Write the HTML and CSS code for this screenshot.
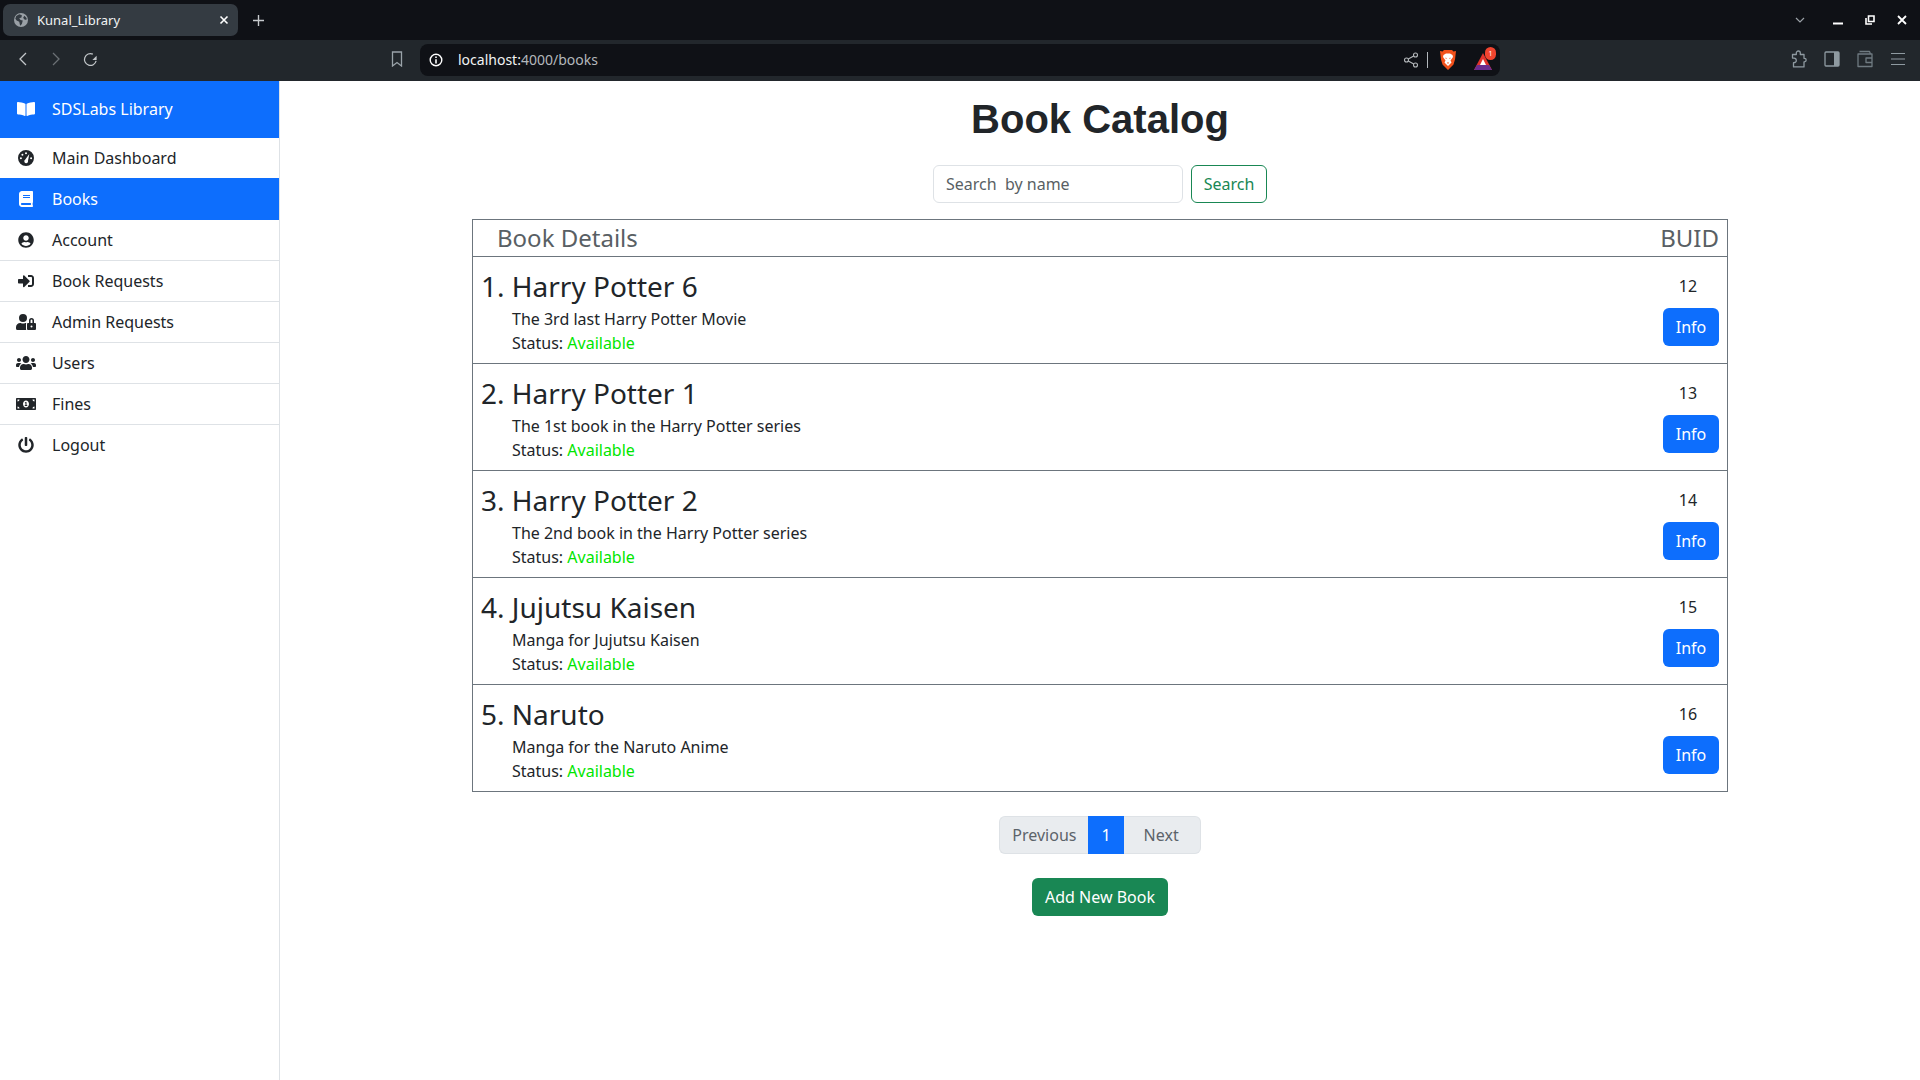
FILE: index.html
```html
<!DOCTYPE html>
<html lang="en">
<head>
    <meta charset="UTF-8">
    <title>Kunal_Library</title>
    <link rel="stylesheet" href="styles.css">
</head>
<body>
    <div class="tabstrip">
        <div class="tab">
            <svg class="tab-globe" viewBox="0 0 16 16"><circle cx="8" cy="8" r="8" fill="#9aa0a6"/><path d="M2.500 3.500l3.500-2 3 1-.5 2.500-2.500 1 1.500 2 2.500.5-1 4-2 2-1-4.500-3-1.500-1.500-2zM12 3l2.500 3-.5 2-2.500-1-1-2z" fill="#343b42"/></svg>
            <span class="tab-title">Kunal_Library</span>
            <svg class="tab-close" viewBox="0 0 10 10"><path d="M1.500 1.500l7 7M8.500 1.500l-7 7" stroke="#fff" stroke-width="1.600"/></svg>
        </div>
        <svg class="tab-new" viewBox="0 0 12 12"><path d="M6 0v12M0 6h12" stroke="#c6cacd" stroke-width="1.500"/></svg>
        <div class="tabstrip-right">
            <svg class="win-chevron" viewBox="0 0 10 6"><path d="M1 1l4 4 4-4" stroke="#9aa0a6" stroke-width="1.200" fill="none"/></svg>
            <svg class="win-btn" viewBox="0 0 10 10"><path d="M0 8.500h10" stroke="#fff" stroke-width="2"/></svg>
            <svg class="win-btn" viewBox="0 0 10 10"><path d="M3.500 1h5.500v5.500h-5.500zM1 3v6h6" stroke="#fff" stroke-width="1.600" fill="none"/></svg>
            <svg class="win-btn" viewBox="0 0 10 10"><path d="M1 1l8 8M9 1l-8 8" stroke="#fff" stroke-width="1.800"/></svg>
        </div>
    </div>
    <div class="toolbar">
        <svg class="nav-icon" viewBox="0 0 10 16"><path d="M8 2L2 8l6 6" stroke="#c3c7ca" stroke-width="1.300" fill="none"/></svg>
        <svg class="nav-icon nav-forward" viewBox="0 0 10 16"><path d="M2 2l6 6-6 6" stroke="#6b7075" stroke-width="1.300" fill="none"/></svg>
        <svg class="nav-reload" viewBox="0 0 16 16"><path d="M14 9.500A6.300 6.300 0 1 1 10.500 2.300" stroke="#c3c7ca" stroke-width="1.300" fill="none"/><path d="M14.500 4v4.500H10z" fill="#c3c7ca"/></svg>
        <svg class="nav-bookmark" viewBox="0 0 12 16"><path d="M1.500 1h9v14l-4.500-3.500L1.500 15z" stroke="#9aa3a9" stroke-width="1.300" fill="none"/></svg>
        <div class="urlbar">
            <svg class="url-info" viewBox="0 0 14 14"><circle cx="7" cy="7" r="5.800" stroke="#fff" stroke-width="1.400" fill="none"/><path d="M7 6.200v4.200M7 3.400v1.700" stroke="#fff" stroke-width="1.600"/></svg>
            <span class="url-text"><span class="url-host">localhost:</span>4000/books</span>
            <svg class="url-share" viewBox="0 0 16 16"><circle cx="3.500" cy="8" r="2" stroke="#b5b9bc" stroke-width="1.100" fill="none"/><circle cx="12.500" cy="3" r="2" stroke="#b5b9bc" stroke-width="1.100" fill="none"/><circle cx="12.500" cy="13" r="2" stroke="#b5b9bc" stroke-width="1.100" fill="none"/><path d="M5.300 7l5.400-3M5.300 9l5.400 3" stroke="#b5b9bc" stroke-width="1.100"/></svg>
            <span class="url-divider"></span>
            <svg class="url-brave" viewBox="0 0 16 20"><path d="M4 0h8l1.500 1.500L16 1l-1 8.500-1.500 5L8 20l-5.500-5.500L1 9.500 0 1l2.500.5z" fill="#f1511b"/><path d="M3.500 5L6 3.500h4L12.500 5l.5 2-2.500 3.500 1 2L8 16l-3.500-3.500 1-2L3 7z" fill="#fff"/><path d="M5.500 7.500L7 8.200 5.800 9zM10.500 7.500L9 8.200 10.200 9zM6.800 12.500h2.400L8 14z" fill="#f1511b"/></svg>
            <div class="url-rewards">
                <svg viewBox="0 0 18 17"><path d="M9 0l9 17H0z" fill="#e2342d"/><path d="M0 17l3-5h12l3 5z" fill="#6a2d8f"/><path d="M9 6l3 6H6z" fill="#fff"/></svg>
                <span class="url-badge">1</span>
            </div>
        </div>
        <div class="toolbar-right">
            <svg class="tool-icon" viewBox="0 0 16 18"><path d="M1.500 4.500h3.800V3a2 2 0 0 1 4 0v1.500h3.700v3.800h.4a1.800 1.800 0 0 1 0 3.600H13v5H2.500v-4.200h.5a2.300 2.300 0 0 0 0-4.600h-1.500z" stroke="#8f9aa1" stroke-width="1.300" fill="none" stroke-linejoin="round"/></svg>
            <svg class="tool-icon" viewBox="0 0 16 18"><rect x="1" y="2" width="14" height="14" rx="1" stroke="#8f9aa1" stroke-width="1.300" fill="none"/><rect x="10" y="2" width="5" height="14" fill="#8f9aa1"/></svg>
            <svg class="tool-icon" viewBox="0 0 16 18"><path d="M2.500 1.500h10l1 2.500M1 4h14v12.500H1zM9 8h6v4.500H9z" stroke="#6f7a81" stroke-width="1.300" fill="none" stroke-linejoin="round"/></svg>
            <svg class="tool-icon" viewBox="0 0 16 18"><path d="M1 3.500h14M1 9h14M1 14.500h14" stroke="#8f9aa1" stroke-width="1.200"/></svg>
        </div>
    </div>

    <div class="page">
        <nav class="sidebar">
            <div class="brand">
                <svg class="side-icon" viewBox="0 0 576 512"><path d="M542.220 32.050c-54.800 3.110-163.720 14.430-230.960 55.590-4.640 2.840-7.270 7.890-7.270 13.170v363.870c0 11.550 12.630 18.850 23.280 13.490 69.180-34.820 169.230-44.320 218.700-46.920 16.890-.89 30.020-14.430 30.020-30.660V62.750c.01-17.710-15.350-31.740-33.770-30.700zM264.730 87.640C197.500 46.480 88.580 35.170 33.780 32.050 15.360 31.010 0 45.040 0 62.750V400.600c0 16.240 13.130 29.780 30.020 30.660 49.490 2.600 149.590 12.110 218.770 46.950 10.620 5.350 23.210-1.940 23.210-13.460V100.630c0-5.290-2.620-10.100-7.270-12.990z"/></svg>
                SDSLabs Library
            </div>
            <a class="side-link">
                <svg class="side-icon" viewBox="0 0 16 16"><path fill-rule="evenodd" d="M8 0a8 8 0 1 1 0 16A8 8 0 0 1 8 0zM7 3.200a1 1 0 1 0 2 0 1 1 0 0 0-2 0zM3.400 4.800a1 1 0 1 0 2 0 1 1 0 0 0-2 0zM1.900 8.300a1 1 0 1 0 2 0 1 1 0 0 0-2 0zM12.100 8.300a1 1 0 1 0 2 0 1 1 0 0 0-2 0zM11.300 3.900L7.100 9.800a1.900 1.900 0 1 0 2.900 1z"/></svg>
                Main Dashboard
            </a>
            <a class="side-link side-active">
                <svg class="side-icon" viewBox="0 0 448 512"><path d="M448 360V24c0-13.300-10.700-24-24-24H96C43 0 0 43 0 96v320c0 53 43 96 96 96h328c13.300 0 24-10.700 24-24v-16c0-7.500-3.500-14.300-8.900-18.700-4.200-15.400-4.200-59.300 0-74.700 5.400-4.300 8.900-11.100 8.900-18.600zM128 134c0-3.300 2.700-6 6-6h212c3.300 0 6 2.700 6 6v20c0 3.300-2.700 6-6 6H134c-3.300 0-6-2.700-6-6v-20zm0 64c0-3.300 2.700-6 6-6h212c3.300 0 6 2.700 6 6v20c0 3.300-2.700 6-6 6H134c-3.300 0-6-2.700-6-6v-20zm253.400 250H96c-17.700 0-32-14.300-32-32 0-17.600 14.400-32 32-32h285.400c-1.900 17.100-1.900 46.900 0 64z"/></svg>
                Books
            </a>
            <a class="side-link side-border">
                <svg class="side-icon" viewBox="0 0 496 512"><path d="M248 8C111 8 0 119 0 256s111 248 248 248 248-111 248-248S385 8 248 8zm0 96c48.600 0 88 39.400 88 88s-39.400 88-88 88-88-39.400-88-88 39.400-88 88-88zm0 344c-58.700 0-111.300-26.600-146.500-68.200 18.800-35.400 55.600-59.800 98.500-59.800 2.400 0 4.800.4 7.100 1.100 13 4.200 26.600 6.900 40.900 6.900 14.300 0 28-2.700 40.900-6.900 2.300-.7 4.700-1.100 7.100-1.100 42.900 0 79.700 24.400 98.500 59.800C359.300 421.400 306.700 448 248 448z"/></svg>
                Account
            </a>
            <a class="side-link side-border">
                <svg class="side-icon" viewBox="0 0 512 512"><path d="M416 448h-84c-6.600 0-12-5.400-12-12v-40c0-6.600 5.400-12 12-12h84c17.700 0 32-14.300 32-32V160c0-17.700-14.300-32-32-32h-84c-6.600 0-12-5.400-12-12V76c0-6.600 5.400-12 12-12h84c53 0 96 43 96 96v192c0 53-43 96-96 96zm-47-201L201 79c-15-15-41-4.500-41 17v96H24c-13.300 0-24 10.700-24 24v96c0 13.300 10.700 24 24 24h136v96c0 21.500 26 32 41 17l168-168c9.300-9.400 9.300-24.600 0-34z"/></svg>
                Book Requests
            </a>
            <a class="side-link side-border">
                <svg class="side-icon" viewBox="0 0 640 512"><path d="M224 256A128 128 0 1 0 96 128a128 128 0 0 0 128 128zm96 64a63.080 63.080 0 0 1 8.100-30.500c-4.800-.5-9.500-1.500-14.500-1.500h-16.700a174.080 174.080 0 0 1-145.800 0h-16.700A134.430 134.430 0 0 0 0 422.400V464a48 48 0 0 0 48 48h280.900a63.540 63.540 0 0 1-8.900-32zm288-32h-32v-80a80 80 0 0 0-160 0v80h-32a32 32 0 0 0-32 32v160a32 32 0 0 0 32 32h224a32 32 0 0 0 32-32V320a32 32 0 0 0-32-32zM496 432a32 32 0 1 1 32-32 32 32 0 0 1-32 32zm30-144H466v-80a30 30 0 0 1 60 0z"/></svg>
                Admin Requests
            </a>
            <a class="side-link side-border">
                <svg class="side-icon" viewBox="0 0 640 512"><path d="M96 224c35.300 0 64-28.700 64-64s-28.700-64-64-64-64 28.700-64 64 28.700 64 64 64zm448 0c35.300 0 64-28.700 64-64s-28.700-64-64-64-64 28.700-64 64 28.700 64 64 64zm32 32h-64c-17.600 0-33.500 7.100-45.100 18.600 40.300 22.100 68.900 62 75.100 109.400h66c17.700 0 32-14.300 32-32v-32c0-35.300-28.700-64-64-64zm-256 0c61.900 0 112-50.100 112-112S381.900 32 320 32 208 82.100 208 144s50.100 112 112 112zm76.800 32h-8.300c-20.800 10-43.900 16-68.500 16s-47.600-6-68.500-16h-8.300C179.600 288 128 339.600 128 403.200V432c0 26.500 21.500 48 48 48h288c26.500 0 48-21.500 48-48v-28.800c0-63.600-51.600-115.200-115.200-115.200zm-223.700-13.400C161.500 263.100 145.600 256 128 256H64c-35.300 0-64 28.700-64 64v32c0 17.700 14.300 32 32 32h65.900c6.300-47.400 34.900-87.300 75.200-109.400z"/></svg>
                Users
            </a>
            <a class="side-link side-border">
                <svg class="side-icon" viewBox="0 0 640 512"><path d="M352 288h-16v-88c0-4.420-3.580-8-8-8h-13.580c-4.740 0-9.370 1.400-13.310 4.030l-15.330 10.220a7.994 7.994 0 0 0-2.220 11.090l8.880 13.310a7.994 7.994 0 0 0 11.090 2.220l.47-.31V288h-16c-4.420 0-8 3.580-8 8v16c0 4.420 3.580 8 8 8h64c4.420 0 8-3.580 8-8v-16c0-4.420-3.580-8-8-8zM608 64H32C14.330 64 0 78.330 0 96v320c0 17.670 14.330 32 32 32h576c17.670 0 32-14.330 32-32V96c0-17.670-14.330-32-32-32zM48 400v-64c35.350 0 64 28.650 64 64H48zm0-224v-64h64c0 35.350-28.650 64-64 64zm272 192c-53 0-96-50.150-96-112 0-61.860 43-112 96-112s96 50.140 96 112c0 61.880-43 112-96 112zm272 32h-64c0-35.350 28.650-64 64-64v64zm0-224c-35.350 0-64-28.650-64-64h64v64z"/></svg>
                Fines
            </a>
            <a class="side-link">
                <svg class="side-icon" viewBox="0 0 512 512"><path d="M400 54.100c63 45 104 118.600 104 201.900 0 136.800-110.800 247.700-247.500 248C120 504.300 8.200 393 8 256.400 7.900 173.100 48.900 99.300 111.800 54.200c11.700-8.300 28-4.800 35 7.700L162.600 90c5.900 10.500 3.100 23.800-6.600 31-41.500 30.800-68 79.600-68 134.900-.1 92.300 74.500 168.100 168 168.100 91.600 0 168.600-74.200 168-169.100-.3-51.800-24.700-101.800-68.100-134-9.700-7.200-12.400-20.500-6.500-30.900l15.800-28.100c7-12.400 23.200-16.100 34.800-7.800zM296 264V24c0-13.300-10.700-24-24-24h-32c-13.300 0-24 10.700-24 24v240c0 13.300 10.700 24 24 24h32c13.300 0 24-10.700 24-24z"/></svg>
                Logout
            </a>
        </nav>

        <main class="content">
            <h1 class="page-title">Book Catalog</h1>
            <form class="search-row">
                <input class="search-input" type="text" placeholder="Search  by name">
                <button class="search-btn" type="button">Search</button>
            </form>

            <div class="catalog">
                <div class="catalog-head">
                    <span class="head-title">Book Details</span>
                    <span>BUID</span>
                </div>
                <div class="book-row">
                    <div class="book-main">
                        <h3 class="book-name">1. Harry Potter 6</h3>
                        <p class="book-desc">The 3rd last Harry Potter Movie</p>
                        <p class="book-desc">Status: <span class="avail">Available</span></p>
                    </div>
                    <div class="book-side"><span class="buid">12</span><a class="info-btn">Info</a></div>
                </div>
                <div class="book-row">
                    <div class="book-main">
                        <h3 class="book-name">2. Harry Potter 1</h3>
                        <p class="book-desc">The 1st book in the Harry Potter series</p>
                        <p class="book-desc">Status: <span class="avail">Available</span></p>
                    </div>
                    <div class="book-side"><span class="buid">13</span><a class="info-btn">Info</a></div>
                </div>
                <div class="book-row">
                    <div class="book-main">
                        <h3 class="book-name">3. Harry Potter 2</h3>
                        <p class="book-desc">The 2nd book in the Harry Potter series</p>
                        <p class="book-desc">Status: <span class="avail">Available</span></p>
                    </div>
                    <div class="book-side"><span class="buid">14</span><a class="info-btn">Info</a></div>
                </div>
                <div class="book-row">
                    <div class="book-main">
                        <h3 class="book-name">4. Jujutsu Kaisen</h3>
                        <p class="book-desc">Manga for Jujutsu Kaisen</p>
                        <p class="book-desc">Status: <span class="avail">Available</span></p>
                    </div>
                    <div class="book-side"><span class="buid">15</span><a class="info-btn">Info</a></div>
                </div>
                <div class="book-row">
                    <div class="book-main">
                        <h3 class="book-name">5. Naruto</h3>
                        <p class="book-desc">Manga for the Naruto Anime</p>
                        <p class="book-desc">Status: <span class="avail">Available</span></p>
                    </div>
                    <div class="book-side"><span class="buid">16</span><a class="info-btn">Info</a></div>
                </div>
            </div>

            <div class="pager">
                <a class="page-link page-first">Previous</a>
                <a class="page-link page-current">1</a>
                <a class="page-link page-last">Next</a>
            </div>
            <a class="add-btn">Add New Book</a>
        </main>
    </div>
</body>
</html>
```

FILE: styles.css
```css
* {
    box-sizing: border-box;
}

body {
    margin: 0;
    height: 1080px;
    overflow: hidden;
    font-family: "Noto Sans", sans-serif;
    font-size: 16px;
    color: #212529;
    background-color: #fff;
    display: flex;
    flex-direction: column;
}

/* browser chrome */
.tabstrip {
    height: 40px;
    background-color: #0f1116;
    display: flex;
    align-items: center;
    padding-left: 3px;
}

.tab {
    width: 235px;
    height: 32px;
    background-color: #343b42;
    border-radius: 7px;
    display: flex;
    align-items: center;
    padding: 0 9px 0 11px;
    color: #f1f3f4;
    font-size: 13px;
}

.tab-globe {
    width: 14px;
    height: 14px;
}

.tab-title {
    margin-left: 9px;
    flex: 1;
}

.tab-close {
    width: 10px;
    height: 10px;
}

.tab-new {
    width: 11px;
    height: 11px;
    margin-left: 15px;
}

.tabstrip-right {
    margin-left: auto;
    display: flex;
    align-items: center;
    padding-right: 13px;
}

.win-chevron {
    width: 10px;
    height: 6px;
    margin-right: 6px;
}

.win-btn {
    width: 10px;
    height: 10px;
    margin-left: 22px;
}

.toolbar {
    height: 41px;
    background-color: #22272c;
    display: flex;
    align-items: center;
    padding: 0 0 3px 18px;
}

.nav-icon {
    width: 10px;
    height: 16px;
}

.nav-forward {
    margin-left: 23px;
}

.nav-reload {
    width: 15px;
    height: 15px;
    margin-left: 22px;
}

.nav-bookmark {
    width: 12px;
    height: 16px;
    margin-left: 293px;
}

.urlbar {
    width: 1080px;
    height: 32px;
    margin: 2px 0 0 17px;
    background-color: #0f1116;
    border-radius: 8px;
    display: flex;
    align-items: center;
    padding-left: 9px;
    font-size: 14px;
    color: #b3b8bc;
}

.url-info {
    width: 14px;
    height: 14px;
}

.url-text {
    margin-left: 15px;
    padding-bottom: 2px;
    flex: 1;
}

.url-host {
    color: #f1f3f4;
}

.url-share {
    width: 16px;
    height: 16px;
}

.url-divider {
    width: 1px;
    height: 16px;
    background-color: #b3b8bc;
    margin: 0 12px 0 8px;
}

.url-brave {
    width: 16px;
    height: 20px;
}

.url-rewards {
    position: relative;
    width: 18px;
    height: 17px;
    margin: 2px 8px 0 18px;
}

.url-rewards svg {
    width: 18px;
    height: 17px;
    display: block;
}

.url-badge {
    position: absolute;
    top: -6px;
    right: -4px;
    width: 11px;
    height: 13px;
    border-radius: 6px;
    background-color: #f0442f;
    color: #fff;
    font-size: 7px;
    line-height: 13px;
    text-align: center;
}

.toolbar-right {
    margin-left: auto;
    display: flex;
    align-items: center;
    gap: 17px;
    padding-right: 14px;
}

.tool-icon {
    width: 16px;
    height: 18px;
    flex: none;
}

/* page */
.page {
    flex: 1;
    display: flex;
    min-height: 0;
}

.sidebar {
    width: 280px;
    flex: none;
    border-right: 1px solid #dee2e6;
}

.brand {
    height: 57px;
    background-color: #0d6efd;
    color: #fff;
    display: flex;
    align-items: center;
    padding: 0 0 2px 16px;
}

.side-icon {
    width: 20px;
    height: 16px;
    margin-right: 16px;
    flex: none;
    fill: currentColor;
}

.side-link {
    height: 40px;
    display: flex;
    align-items: center;
    padding-left: 16px;
}

.side-active {
    height: 42px;
    background-color: #0d6efd;
    color: #fff;
}

.side-border {
    height: 41px;
    border-bottom: 1px solid #dee2e6;
}

.content {
    flex: 1;
    display: flex;
    flex-direction: column;
    align-items: center;
}

.page-title {
    margin: 9px 0 17px;
    font-family: "Liberation Sans", Arial, sans-serif;
    font-size: 40px;
    font-weight: bold;
    line-height: 58px;
}

.search-row {
    display: flex;
    gap: 8px;
    margin-bottom: 16px;
}

.search-input {
    width: 250px;
    height: 38px;
    padding: 6px 12px;
    font-family: inherit;
    font-size: 16px;
    border: 1px solid #dee2e6;
    border-radius: 6px;
    color: #212529;
}

.search-input::placeholder {
    color: #595f64;
    opacity: 1;
}

.search-btn {
    width: 76px;
    height: 38px;
    font-family: inherit;
    font-size: 16px;
    color: #198754;
    background-color: #fff;
    border: 1px solid #198754;
    border-radius: 6px;
}

.catalog {
    width: 1256px;
    border: 1px solid #6c757d;
}

.catalog-head {
    height: 37px;
    border-bottom: 1px solid #6c757d;
    display: flex;
    align-items: center;
    justify-content: space-between;
    padding: 0 8px 2px 24px;
    font-size: 24px;
    color: #595f64;
}

.book-row {
    height: 107px;
    display: flex;
    justify-content: space-between;
    border-bottom: 1px solid #6c757d;
    padding: 12px 8px 0;
}

.book-row:last-child {
    height: 106px;
    border-bottom: none;
}

.book-name {
    margin: 0 0 4px;
    font-size: 28px;
    font-weight: 400;
    line-height: 34px;
}

.book-desc {
    margin: 0 0 0 31px;
    line-height: 24px;
}

.avail {
    color: #00e600;
}

.book-side {
    display: flex;
    flex-direction: column;
    align-items: center;
    width: 56px;
}

.buid {
    line-height: 24px;
    margin: 5px 6px 10px 0;
}

.info-btn {
    width: 56px;
    height: 38px;
    line-height: 38px;
    text-align: center;
    color: #fff;
    background-color: #0d6efd;
    border-radius: 6px;
}

.pager {
    display: flex;
    margin-top: 24px;
}

.page-link {
    height: 38px;
    line-height: 36px;
    padding: 0 12px;
    color: #5c636a;
    background-color: #e9ecef;
    border: 1px solid #dee2e6;
}

.page-first {
    border-radius: 6px 0 0 6px;
    border-right: none;
}

.page-current {
    padding: 0 13px;
    color: #fff;
    background-color: #0d6efd;
    border: none;
    line-height: 38px;
}

.page-last {
    padding: 0 21px 0 20px;
    border-radius: 0 6px 6px 0;
    border-left: none;
}

.add-btn {
    margin-top: 24px;
    width: 136px;
    height: 38px;
    line-height: 38px;
    text-align: center;
    color: #fff;
    background-color: #198754;
    border-radius: 6px;
}
```
